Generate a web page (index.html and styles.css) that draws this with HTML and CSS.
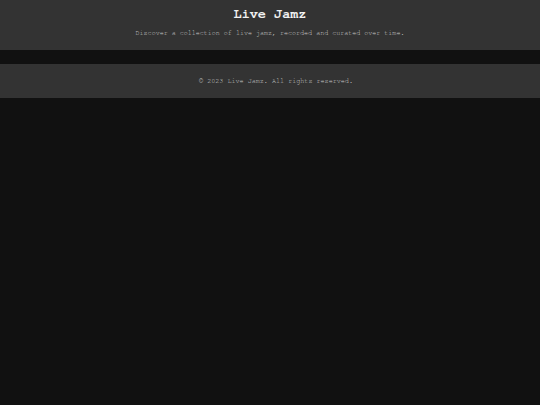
FILE: index.html
```html
<!DOCTYPE html>
<html lang="en">
<head>
<meta charset="utf-8">
<title>Live Jamz</title>
<link rel="stylesheet" href="styles.css">
</head>
<body>
<header class="site-header">
  <h1 class="title">Live Jamz</h1>
  <p class="tagline">Discover a collection of live jamz, recorded and curated over time.</p>
</header>
<main class="content"></main>
<footer class="site-footer">
  <p class="copy">© 2023 Live Jamz. All rights reserved.</p>
</footer>
</body>
</html>
```
FILE: styles.css
```css
html, body {
  margin: 0;
  padding: 0;
  background: #111111;
  font-family: "Nimbus Mono PS", "Nimbus Mono L", FreeMono, "Liberation Mono", monospace;
}
.site-header {
  background: #333333;
  text-align: center;
  padding: 7px 0 13.5px;
}
.title {
  margin: 0;
  font-size: 13.5px;
  line-height: 15px;
  font-weight: bold;
  color: #f2f2f2;
}
.tagline {
  margin: 6.5px 0 0;
  font-size: 6.7px;
  line-height: 8px;
  color: #cccccc;
}
.content {
  height: 14px;
}
.site-footer {
  background: #333333;
  text-align: center;
  padding: 13px 0 13px 12px;
}
.copy {
  margin: 0;
  font-size: 6.75px;
  line-height: 8px;
  color: #cccccc;
}
```
